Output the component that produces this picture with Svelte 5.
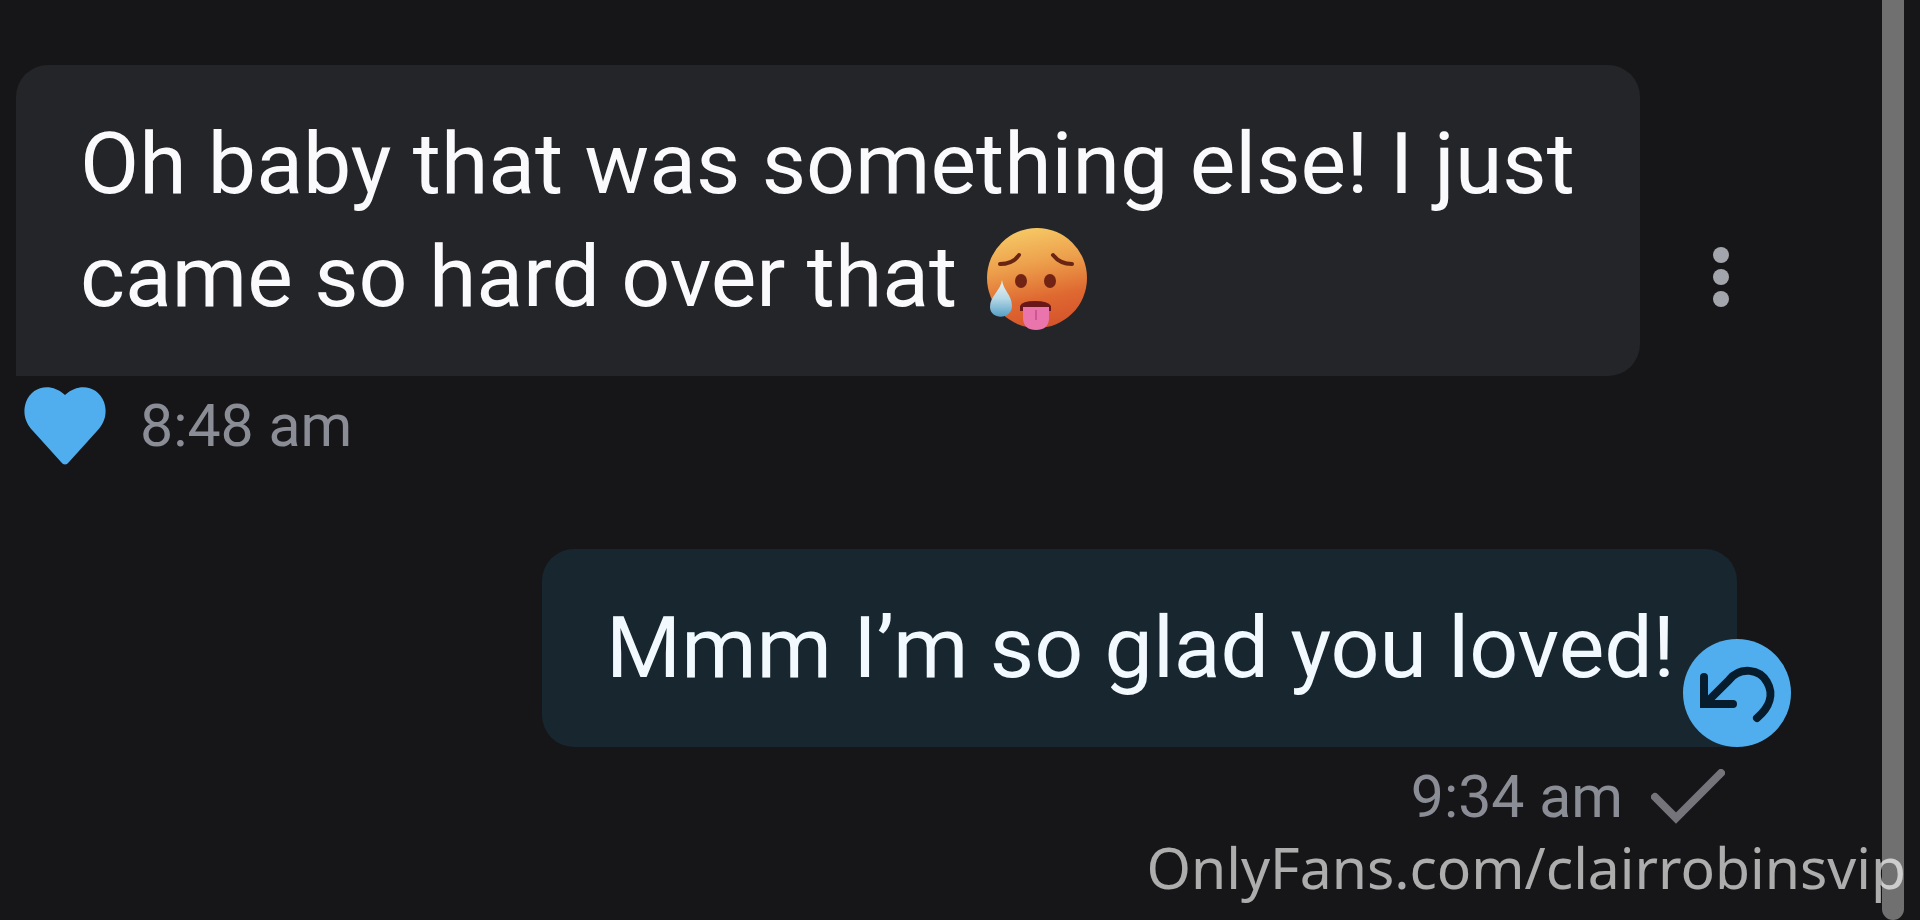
<script lang="ts">
    interface Message {
        id: number;
        text: string;
        time: string;
        mine: boolean;
        emoji?: boolean;
    }

    const messages: Message[] = [
        {
            id: 1,
            text: "Oh baby that was something else! I just came so hard over that",
            time: "8:48 am",
            mine: false,
            emoji: true,
        },
        { id: 2, text: "Mmm I’m so glad you loved!", time: "9:34 am", mine: true },
    ];

    const watermark = "OnlyFans.com/clairrobinsvip";
</script>

{#snippet hotFace()}
    <svg class="emoji" viewBox="0 0 100 100" role="img" aria-label="Hot face">
        <defs>
            <linearGradient id="face" x1="0.4" y1="0" x2="0.6" y2="1">
                <stop offset="0" stop-color="#f6c865" />
                <stop offset="0.35" stop-color="#eda04c" />
                <stop offset="0.7" stop-color="#df6931" />
                <stop offset="1" stop-color="#d5532b" />
            </linearGradient>
            <linearGradient id="drop" x1="0" y1="0" x2="0" y2="1">
                <stop offset="0" stop-color="#f2f3ef" />
                <stop offset="0.5" stop-color="#b6d9e6" />
                <stop offset="1" stop-color="#579fc6" />
            </linearGradient>
        </defs>
        <circle cx="50" cy="49" r="50" fill="url(#face)" />
        <g fill="none" stroke="#692412" stroke-width="4" stroke-linecap="round">
            <path d="M13 35Q26 35 32 26" />
            <path d="M66 26Q73 35 85 35" />
        </g>
        <ellipse cx="34" cy="52" rx="6" ry="7" fill="#722313" />
        <ellipse cx="63" cy="52" rx="6" ry="7" fill="#722313" />
        <path d="M33 82V77Q35 72 48 72T64 77V82Z" fill="#691719" />
        <path d="M36 78H62V90Q61 101 49 101T36 90Z" fill="#e975ac" />
        <path d="M49 81V91" stroke="#cb5794" stroke-width="2" />
        <path d="M15 51C14 61 3 67 3 78C3 91 25 91 25 77C25 66 16 61 15 51Z" fill="url(#drop)" />
    </svg>
{/snippet}

<div class="page">
    <main class="chat">
        {#each messages as message (message.id)}
            <article class="message" class:mine={message.mine}>
                <div class="content">
                    <div class="bubble">
                        <p>
                            {message.text}
                            {#if message.emoji}{@render hotFace()}{/if}
                        </p>
                        {#if message.mine}
                            <button class="undo" aria-label="Unsend message">
                                <svg viewBox="0 0 108 108" aria-hidden="true">
                                    <path d="M21 38V65H50M25 62L46 41C57 27 77 30 84 43C91 55 87 68 74 79" />
                                </svg>
                            </button>
                        {/if}
                    </div>
                    <div class="meta">
                        {#if !message.mine}
                            <button class="like" aria-label="Unlike message">
                                <svg viewBox="0 0 82 78" aria-hidden="true">
                                    <path d="M41 8C27-5 8-1 2 15C-2 27 2 37 9 44L37 75Q41 80 45 75L73 44C80 37 84 27 80 15C74-1 55-5 41 8Z" />
                                </svg>
                            </button>
                        {/if}
                        <time>{message.time}</time>
                        {#if message.mine}
                            <svg class="sent" viewBox="0 0 74 56" role="img" aria-label="Sent">
                                <path d="M4 28L25 49L70 4" />
                            </svg>
                        {/if}
                    </div>
                </div>
                {#if !message.mine}
                    <button class="menu" aria-label="Message options">
                        <svg viewBox="0 0 32 60" aria-hidden="true">
                            <circle cx="16" cy="8" r="8" />
                            <circle cx="16" cy="30" r="8" />
                            <circle cx="16" cy="52" r="8" />
                        </svg>
                    </button>
                {/if}
            </article>
        {/each}
    </main>
    <div class="scrollbar"></div>
    <div class="watermark">{watermark}</div>
</div>

<style>
    :global(body) {
        margin: 0;
        background: #161618;
    }

    .page {
        position: relative;
        display: flex;
        min-height: 100vh;
        overflow: hidden;
        background: #161618;
        font-family: Roboto, "Noto Sans", sans-serif;
    }

    .chat {
        flex: 1;
        display: flex;
        flex-direction: column;
        gap: 60px;
        box-sizing: border-box;
        padding: 65px 145px 0 16px;
    }

    .message {
        display: flex;
        align-items: center;
        gap: 65px;
    }

    .content {
        flex: 1;
    }

    .mine {
        justify-content: flex-end;
    }

    .mine .content {
        flex: none;
    }

    .bubble {
        position: relative;
        padding: 42px 62px 43px 64px;
        border-radius: 32px 32px 32px 0;
        background: #242529;
        color: #fafafc;
        font-size: 86px;
        line-height: 113px;
    }

    .mine .bubble {
        border-radius: 32px 32px 0 32px;
        background: #18272f;
        color: #f2faff;
    }

    p {
        margin: 0;
    }

    button {
        display: block;
        padding: 0;
        border: none;
        background: none;
        cursor: pointer;
    }

    button svg {
        display: block;
        width: 100%;
    }

    .emoji {
        width: 100px;
        height: 102px;
        margin-left: 8px;
        vertical-align: -24px;
        overflow: visible;
    }

    .undo {
        position: absolute;
        right: -54px;
        bottom: 0;
        width: 108px;
        height: 108px;
        border-radius: 50%;
        background: #50aeee;
    }

    .undo path {
        fill: none;
        stroke: #071c2d;
        stroke-width: 8;
        stroke-linecap: round;
    }

    .meta {
        display: flex;
        align-items: center;
        height: 80px;
        padding: 10px 8px 23px;
        color: #8b8d96;
        font-size: 59px;
        line-height: 80px;
    }

    .mine .meta {
        justify-content: flex-end;
        gap: 28px;
        padding-right: 12px;
    }

    .like {
        width: 82px;
        margin-right: 34px;
    }

    .like path {
        fill: #50aeee;
    }

    .sent {
        width: 74px;
        height: 56px;
    }

    .sent path {
        fill: none;
        stroke: #74747a;
        stroke-width: 8;
        stroke-linecap: round;
    }

    .menu {
        width: 32px;
    }

    .menu circle {
        fill: #a2a5ab;
    }

    .scrollbar {
        width: 22px;
        margin-right: 16px;
        border-radius: 0 0 11px 11px;
        background: #707070;
    }

    .watermark {
        position: absolute;
        right: 14px;
        bottom: 13px;
        color: rgba(255, 255, 255, 0.65);
        font-family: "Noto Sans", "Open Sans", sans-serif;
        font-size: 57px;
        line-height: 80px;
    }
</style>
